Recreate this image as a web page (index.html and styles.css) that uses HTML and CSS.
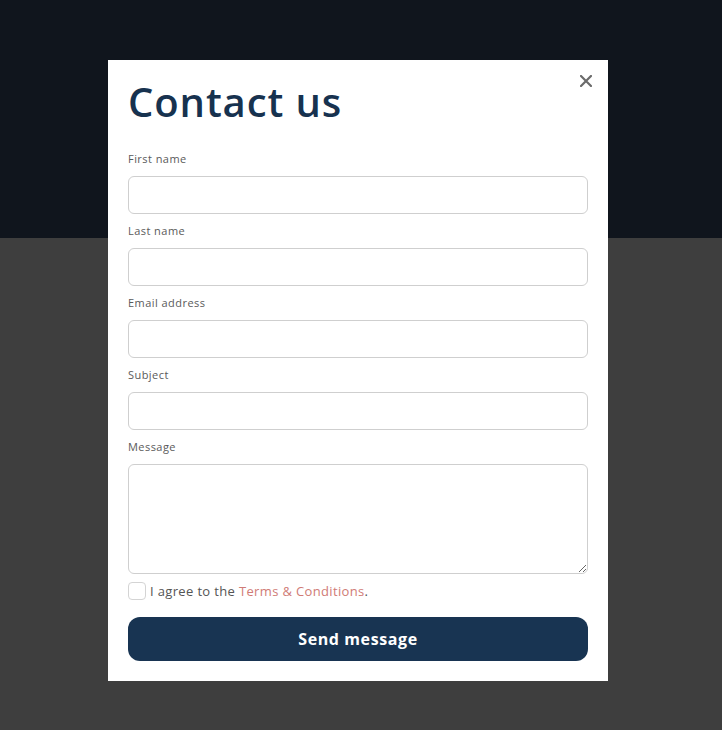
FILE: index.html
```html
<!DOCTYPE html>
<html lang="en">
<head>
<meta charset="utf-8">
<title>Contact us</title>
<link rel="stylesheet" href="styles.css">
</head>
<body>
<div class="page">
  <div class="hero"></div>
  <div class="rest"></div>
</div>
<div class="modal">
  <button class="close" aria-label="Close">
    <svg width="12" height="12" viewBox="0 0 12 12"><path d="M1 1L11 11M11 1L1 11" stroke="#6b6b6b" stroke-width="2.2" stroke-linecap="square"/></svg>
  </button>
  <h1 class="title">Contact us</h1>
  <form class="form">
    <label class="field"><span class="label">First name</span><input class="input" type="text"></label>
    <label class="field"><span class="label">Last name</span><input class="input" type="text"></label>
    <label class="field"><span class="label">Email address</span><input class="input" type="email"></label>
    <label class="field"><span class="label">Subject</span><input class="input" type="text"></label>
    <label class="field"><span class="label">Message</span><textarea class="input textarea"></textarea></label>
    <label class="agree"><input class="check" type="checkbox"><span>I agree to the <a class="link" href="#">Terms &amp; Conditions</a>.</span></label>
    <button class="send" type="button">Send message</button>
  </form>
</div>
</body>
</html>
```
FILE: styles.css
```css
html, body {
  margin: 0;
  padding: 0;
}
body {
  font-family: "Open Sans", "Liberation Sans", sans-serif;
  background: #3e3e3e;
  height: 730px;
  overflow: hidden;
}
.page {
  display: flex;
  flex-direction: column;
  height: 730px;
}
.hero {
  height: 238px;
  background: #10151d;
}
.rest {
  flex: 1;
  background: #3e3e3e;
}
.modal {
  position: absolute;
  left: 108px;
  top: 60px;
  width: 500px;
  box-sizing: border-box;
  background: #fff;
  padding: 20px;
}
.close {
  position: absolute;
  right: 16px;
  top: 15px;
  width: 12px;
  height: 12px;
  padding: 0;
  border: 0;
  background: none;
  display: block;
}
.close svg { display: block; }
.title {
  margin: -2px 0 25px;
  font-size: 40px;
  line-height: 48px;
  font-weight: 600;
  color: #17324f;
  letter-spacing: 0.9px;
}
.form {
  display: flex;
  flex-direction: column;
}
.field {
  display: flex;
  flex-direction: column;
  gap: 9px;
  margin-bottom: 9px;
}
.label {
  font-size: 11px;
  line-height: 16px;
  color: #5a5a5a;
  letter-spacing: 0.45px;
}
.input {
  box-sizing: border-box;
  height: 38px;
  width: 100%;
  border: 1px solid #cfcfcf;
  border-radius: 6px;
  margin: 0;
  font: inherit;
  background: #fff;
}
.textarea {
  height: 110px;
  resize: vertical;
}
.agree {
  display: flex;
  align-items: center;
  gap: 4px;
  font-size: 13px;
  line-height: 18px;
  color: #555;
  letter-spacing: 0.35px;
  margin-top: -1px;
}
.check {
  appearance: none;
  -webkit-appearance: none;
  width: 18px;
  height: 18px;
  margin: 0;
  border: 1px solid #d4d4d4;
  border-radius: 4px;
  background: #fff;
  box-sizing: border-box;
}
.link {
  color: #d07b76;
  text-decoration: none;
}
.send {
  margin-top: 17px;
  height: 44px;
  border: 0;
  border-radius: 12px;
  background: #183452;
  color: #fff;
  font-family: inherit;
  font-size: 16px;
  font-weight: 700;
  letter-spacing: 0.6px;
}
```
